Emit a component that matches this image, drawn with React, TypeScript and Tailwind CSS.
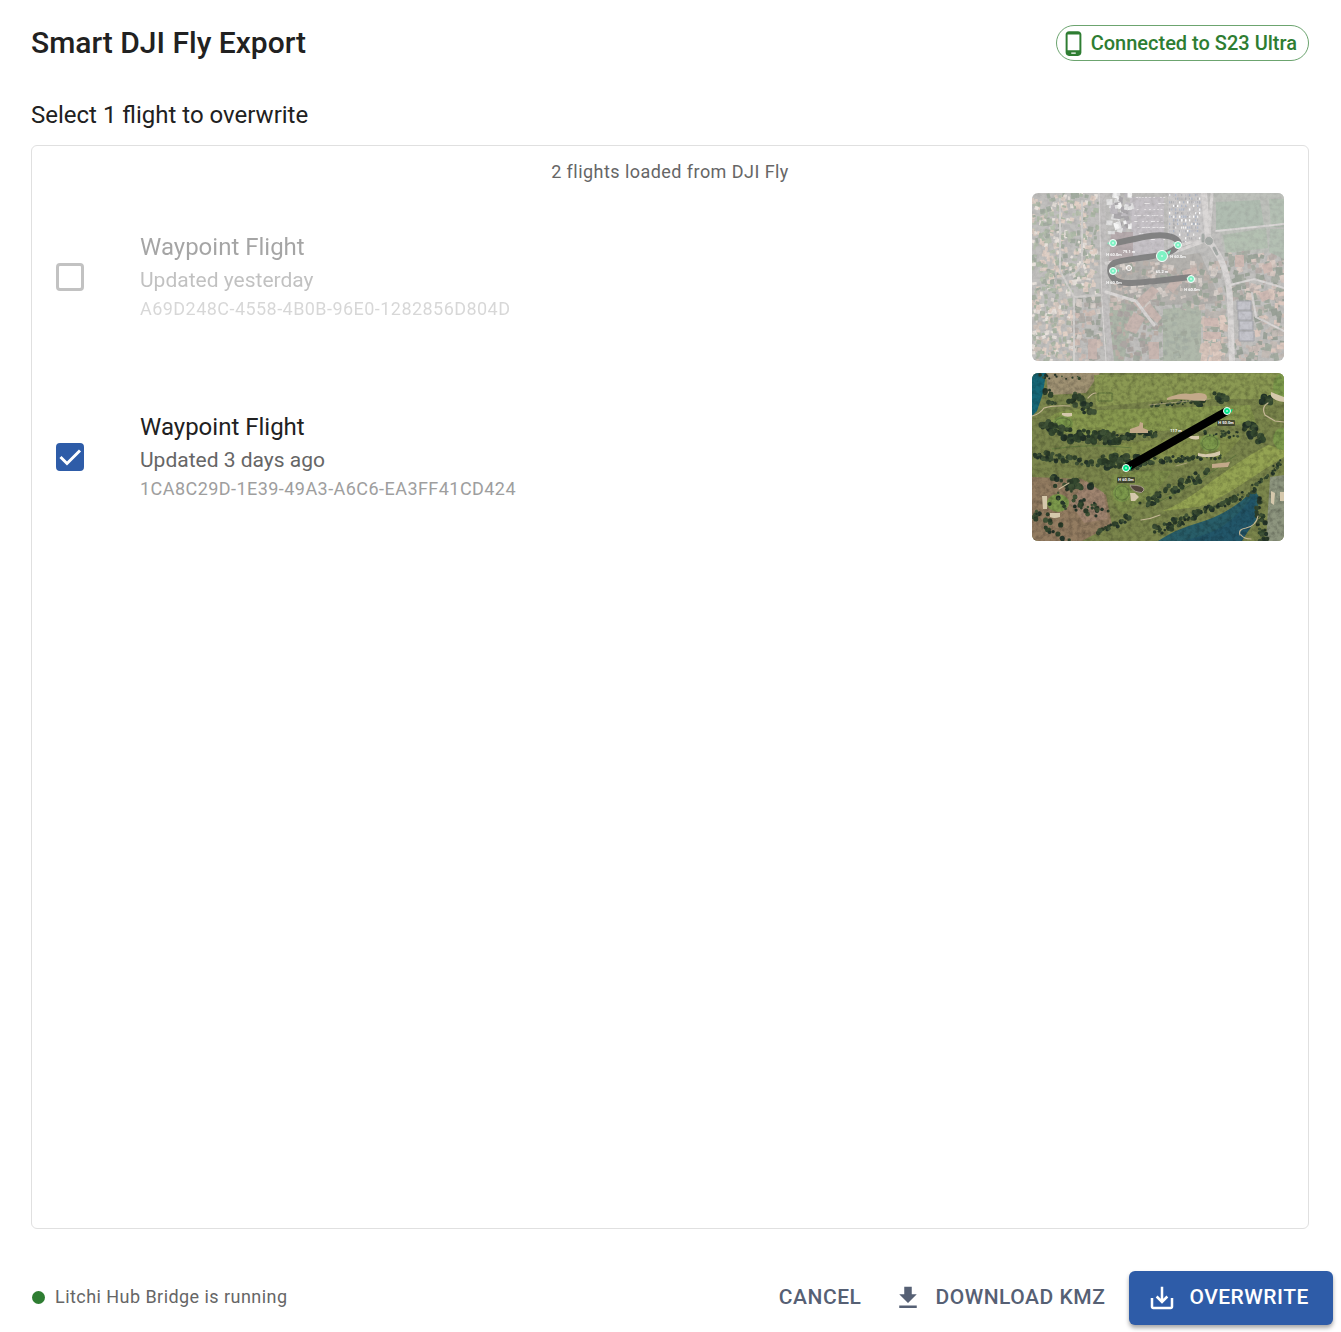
import { useState } from "react";
import { MdGetApp, MdPhoneAndroid, MdSaveAlt } from "react-icons/md";

type Point = [number, number];

// small seeded generator so the scattered trees and roofs never move between renders
function scatter(seed: number) {
  let state = seed;
  return () => {
    state = (state * 16807) % 2147483647;
    return state / 2147483647;
  };
}

type Band = { from: Point; to: Point; spread: number; count: number; size: number };

const golfTrees: Band[] = [
  { from: [40, 25], to: [62, 38], spread: 6, count: 26, size: 4 },
  { from: [12, 52], to: [46, 65], spread: 5, count: 34, size: 4 },
  { from: [46, 60], to: [82, 66], spread: 6, count: 44, size: 4 },
  { from: [82, 65], to: [126, 60], spread: 3, count: 36, size: 3 },
  { from: [14, 17], to: [20, 28], spread: 4, count: 12, size: 3 },
  { from: [2, 82], to: [62, 90], spread: 4, count: 44, size: 3 },
  { from: [66, 88], to: [106, 90], spread: 6, count: 46, size: 4 },
  { from: [106, 90], to: [160, 84], spread: 3, count: 40, size: 3 },
  { from: [160, 86], to: [192, 84], spread: 2, count: 18, size: 2 },
  { from: [118, 32], to: [168, 28], spread: 2, count: 26, size: 2 },
  { from: [170, 60], to: [208, 62], spread: 3, count: 26, size: 2 },
  { from: [112, 132], to: [172, 100], spread: 5, count: 54, size: 3 },
  { from: [124, 158], to: [176, 136], spread: 4, count: 54, size: 3 },
  { from: [176, 138], to: [222, 116], spread: 3, count: 44, size: 3 },
  { from: [222, 114], to: [252, 88], spread: 3, count: 30, size: 2 },
  { from: [226, 122], to: [232, 166], spread: 4, count: 30, size: 3 },
  { from: [186, 24], to: [194, 26], spread: 4, count: 12, size: 4 },
  { from: [165, 28], to: [169, 30], spread: 3, count: 8, size: 4 },
  { from: [230, 24], to: [238, 30], spread: 4, count: 12, size: 4 },
  { from: [216, 54], to: [228, 66], spread: 5, count: 22, size: 4 },
  { from: [20, 108], to: [60, 112], spread: 5, count: 22, size: 4 },
  { from: [20, 122], to: [72, 142], spread: 9, count: 38, size: 3 },
  { from: [6, 142], to: [34, 164], spread: 7, count: 24, size: 3 },
  { from: [64, 160], to: [100, 144], spread: 3, count: 30, size: 3 },
  { from: [0, 2], to: [60, 4], spread: 3, count: 14, size: 2 },
];

const canopyColors = ["#2c3e2a", "#34482f", "#25362a", "#3f5236"];

function Trees({ bands, seed }: { bands: Band[]; seed: number }) {
  const next = scatter(seed);
  return (
    <g>
      {bands.map((band, b) =>
        Array.from({ length: band.count }, (_, i) => {
          const t = next();
          const x = band.from[0] + (band.to[0] - band.from[0]) * t + (next() - 0.5) * band.spread * 2;
          const y = band.from[1] + (band.to[1] - band.from[1]) * t + (next() - 0.5) * band.spread * 2;
          const r = band.size * (0.4 + next() * 0.5);
          return <circle key={`${b}-${i}`} cx={x} cy={y} r={r} fill={canopyColors[Math.floor(next() * 4)]} />;
        })
      )}
    </g>
  );
}

type Block = { x: number; y: number; w: number; h: number; count: number; size: number; colors: string[] };

const townBlocks: Block[] = [
  { x: 0, y: 0, w: 66, h: 100, count: 380, size: 5, colors: ["#5d7551", "#708260", "#c7a48f", "#bda08d", "#d4c7bb", "#4a5d45"] },
  { x: 0, y: 100, w: 40, h: 68, count: 170, size: 5, colors: ["#5d7551", "#a58d7c", "#c7a48f", "#d4c7bb", "#596b4d"] },
  { x: 42, y: 104, w: 28, h: 64, count: 75, size: 6, colors: ["#46523f", "#695e55", "#a58070", "#b3a398"] },
  { x: 76, y: 0, w: 22, h: 40, count: 50, size: 7, colors: ["#c9c8c9", "#575259", "#807a83", "#eeeeee"] },
  { x: 76, y: 104, w: 54, h: 62, count: 120, size: 6, colors: ["#4c5a46", "#5c5049", "#796152", "#56694f"] },
  { x: 80, y: 70, w: 110, h: 45, count: 170, size: 6, colors: ["#46563e", "#766457", "#9b8174", "#5c5751", "#b3a398"] },
  { x: 130, y: 112, w: 66, h: 54, count: 80, size: 6, colors: ["#536650", "#66775c", "#49583f"] },
  { x: 170, y: 118, w: 26, h: 50, count: 45, size: 8, colors: ["#ad8875", "#c39a86", "#7e746a"] },
  { x: 192, y: 58, w: 60, h: 48, count: 105, size: 7, colors: ["#3d4d38", "#b7988a", "#79665d", "#56604d"] },
  { x: 222, y: 98, w: 30, h: 70, count: 75, size: 7, colors: ["#374634", "#bb9381", "#8a7b70", "#4b5b45"] },
  { x: 200, y: 148, w: 30, h: 20, count: 26, size: 6, colors: ["#374634", "#4b5b45", "#9b8174"] },
];

function Roofs() {
  const next = scatter(4711);
  return (
    <g>
      {townBlocks.map((block, b) =>
        Array.from({ length: block.count }, (_, i) => {
          const x = block.x + next() * block.w;
          const y = block.y + next() * block.h;
          const w = block.size * (0.4 + next() * 0.7);
          const h = block.size * (0.4 + next() * 0.7);
          const fill = block.colors[Math.floor(next() * block.colors.length)];
          return (
            <rect key={`${b}-${i}`} x={x - w / 2} y={y - h / 2} width={w} height={h} fill={fill}
              transform={`rotate(${-20 + next() * 40} ${x} ${y})`} />
          );
        })
      )}
    </g>
  );
}

function Cars() {
  const next = scatter(99);
  return (
    <g>
      {Array.from({ length: 200 }, (_, i) => (
        <rect key={i} x={137 + Math.floor(next() * 16) * 2} y={1 + Math.floor(next() * 14) * 3.6} width="1.3" height="2.2"
          fill={["#ffffff", "#6c6b70", "#87858b", "#6a7a98"][Math.floor(next() * 4)]} />
      ))}
      {Array.from({ length: 70 }, (_, i) => (
        <rect key={`r${i}`} x={102 + next() * 30} y={4 + Math.floor(next() * 8) * 6} width="2" height="1"
          fill="#e8e4e6" opacity="0.7" />
      ))}
    </g>
  );
}

function Grain({ id }: { id: string }) {
  return (
    <>
      <filter id={id} x="0" y="0" width="100%" height="100%">
        <feTurbulence type="fractalNoise" baseFrequency="0.22" numOctaves="4" seed="8" />
        <feColorMatrix values="0 0 0 0 0  0 0 0 0 0  0 0 0 0 0  1.6 0 0 0 -0.6" />
      </filter>
      <rect width="252" height="168" filter={`url(#${id})`} opacity="0.3" />
    </>
  );
}

function Marker({ x, y, r = 3.5 }: { x: number; y: number; r?: number }) {
  return (
    <g>
      <circle cx={x} cy={y} r={r} fill="#00e68a" stroke="#fff" strokeWidth="1" />
      <path d={`M${x} ${y - 1}v2`} stroke="#fff" strokeWidth="1" />
    </g>
  );
}

function MapLabel({ x, y, text, boxed }: { x: number; y: number; text: string; boxed?: boolean }) {
  return (
    <g>
      {boxed && <rect x={x - 9} y={y - 4} width="18" height="6" rx="1" fill="#222" opacity="0.65" />}
      <text x={x} y={y} textAnchor="middle" fontSize="4" fontWeight="700" fill="#fff">
        {text}
      </text>
    </g>
  );
}

function TownMap() {
  return (
    <svg viewBox="0 0 252 168" className="h-full w-full" role="img" aria-label="Flight path over a town">
      <rect width="252" height="168" fill="#85837f" />
      <path d="M98 4h34v62l-32 3z" fill="#8f8790" />
      <path d="M79 39h22v30l-24 2z" fill="#70595e" />
      <path d="M136 0h38v44l-38 12z" fill="#9a9696" />
      <path d="M78 72l90-12 22 50-110 4z" fill="#6b675f" />
      <path d="M78 106l24 8-10 54H78z" fill="#5d6f54" />
      <path d="M131 116l38-3v55h-38z" fill="#64765a" />
      <path d="M181 0h71v60h-60z" fill="#7f857a" />
      <Cars />
      <Roofs />
      <path d="M184 9l44-2 4 26-48 5z" fill="#647e66" />
      <path d="M191 42l43-7 2 20-42 5z" fill="#6c8468" />
      <path d="M237 6h15v28h-13zM238 36h14v30l-15-7z" fill="#6b826a" />
      <g fill="#937064">
        <path d="M101 110l19-17 7 5-19 19zM92 136l10-17 11 6-9 16zM134 94l12-13 6 5-11 14zM116 149h11v17h-10zM56 146h9v20h-9z" />
        <path d="M110 117l8-7 12 15-5 5z" />
      </g>
      <g fill="#a3796c">
        <path d="M172 125h14v8h-14zM171 139h18v7h-18zM203 62h9v12h-9zM230 72l9-3 2 9-9 3zM150 78l14-4 2 6-14 5zM226 100l10-3 3 8-9 4z" />
      </g>
      <g fill="none" stroke="#b8b2b0" strokeLinecap="round">
        <path d="M70 0l3 110 6 58" strokeWidth="6" stroke="#8b8786" />
        <path d="M67 0l3 110 4 58" strokeWidth="1" />
        <path d="M172 0l4 46c10 14 20 28 22 60l2 62" strokeWidth="6" />
        <path d="M180 0l-3 44" strokeWidth="3" />
        <path d="M74 99l30 9 18 24M74 70l60-8 36-13M170 49q-8-2-20 3" strokeWidth="3" />
        <path d="M184 38l68-7M198 92l24-6 30 9M220 100l4 24 28 14" strokeWidth="2" />
        <path d="M28 6v72l14 26 28-2M38 82q6 0 12-12V8M42 104v64" strokeWidth="2" stroke="#a9a49f" />
      </g>
      <circle cx="177" cy="48" r="4.5" fill="#4c5750" stroke="#a7a19d" strokeWidth="1" />
      <path d="M171 42v6M182 55l3 6" stroke="#4c5750" strokeWidth="3" strokeLinecap="round" />
      <g fill="#8d8d9b" stroke="#4d4e59">
        <path d="M205 108h14v9h-14zM206 118h14v9h-14zM207 128h14v9h-14zM207 138h15v10h-15z" />
      </g>
      <Grain id="town-grain" />
      <g fill="none" stroke="#000" strokeWidth="6" opacity="0.94">
        <path d="M83 50c18-3 38-10 53-7 7 1 12 5 10 9-4 8-17 10-30 12-14 2-28 3-34 6-6 4-4 12 0 16 8 7 26 3 42 2l35-4" />
      </g>
      <MapLabel x={82} y={63} text="H 60.0m" />
      <MapLabel x={97} y={60} text="79.1 m" />
      <MapLabel x={146} y={65} text="H 60.0m" />
      <MapLabel x={130} y={80} text="65.2 m" />
      <MapLabel x={82} y={91} text="H 60.0m" />
      <MapLabel x={160} y={98} text="H 60.0m" />
      <circle cx="97" cy="75" r="2.5" fill="none" stroke="#fff" />
      <path d="M75 50l3-1v3zM141 50l3-1-1 3zM135 59l4-2-2 5zM85 78l2-2v3zM154 85l3-1v3z" fill="#00e68a" />
      <Marker x={81} y={50} />
      <Marker x={146} y={52} />
      <Marker x={81} y={78} />
      <Marker x={159} y={86} />
      <Marker x={130} y={63} r={5.5} />
    </svg>
  );
}

function GolfMap() {
  return (
    <svg viewBox="0 0 252 168" className="h-full w-full" role="img" aria-label="Flight path over a golf course">
      <rect width="252" height="168" fill="#7b864c" />
      <path d="M14 0h54L54 20 16 22z" fill="#a19374" />
      <path d="M62 2l190-2v26l-110 0-78 8z" fill="#8b9953" />
      <path d="M18 44q12-10 50-7l150-5 6 18-94 8-76 4-40-4z" fill="#88994f" />
      <path d="M90 70l90-8 30 2-20 22-120 2z" fill="#84914c" />
      <path d="M130 138c30-10 60-42 106-66l16 4v8c-30 18-60 42-86 50z" fill="#95a453" />
      <path d="M80 102q30-6 60-4l-20 26-30 18q-16-16-10-40z" fill="#7f8f4c" />
      <path d="M0 104l50 2 24 16 6 30-30 16H0z" fill="#937c61" />
      <path d="M54 108l18 12 4 26-24 4-14-20z" fill="#a08570" />
      <path d="M0 0h14l-3 20-6 18-5 5z" fill="#176878" />
      <path d="M126 168q18-12 40-18 34-10 56-34l5 8-2 22-16 22z" fill="#285d68" />
      <path d="M150 168q36-8 50-22 14-12 23-26l1 24-14 24z" fill="#225669" />
      <path d="M238 104l14-2v66h-18z" fill="#8e967f" />
      <g fill="#7d9a4c">
        <ellipse cx="31" cy="50" rx="10" ry="7" />
        <ellipse cx="178" cy="70" rx="10" ry="9" />
        <ellipse cx="90" cy="120" rx="9" ry="9" />
        <ellipse cx="26" cy="130" rx="11" ry="9" />
        <ellipse cx="250" cy="14" rx="9" ry="13" />
        <ellipse cx="250" cy="66" rx="9" ry="11" />
      </g>
      <g fill="none" stroke="#647b40" strokeWidth="1">
        <ellipse cx="31" cy="50" rx="8" ry="5" />
        <ellipse cx="178" cy="70" rx="8" ry="7" />
        <ellipse cx="90" cy="120" rx="7" ry="7" />
        <path d="M66 20h14v8H66zM204 82q-40 30-80 48M20 76q40-6 80-1" />
      </g>
      <Trees bands={golfTrees} seed={2718} />
      <Grain id="golf-grain" />
      <g fill="#c3a98a">
        <path d="M135 25q14-6 24-4 8-2 14 0 4 3 0 7l-28-2-10 1zM98 56l9-3 1-4 3 1v5l5 2v3H98zM180 91l18-2-2 5-16 1z" />
      </g>
      <g fill="#d5c8ac">
        <path d="M155 63h12v3q-7 2-12-3zM166 80q10 3 22-2v4q-10 4-22 1zM239 19l5 2 8 3v5q-10-1-13-6zM98 120h5l4 4-4 4h-4zM10 123h5v13h-4zM18 140h10v4q-6 2-10 0zM30 40h10v3q-6 2-10-1zM239 118l4 2-1 12-3-2zM248 119h4v9h-4z" />
      </g>
      <g fill="none" stroke="#c4b695" strokeWidth="1.2" strokeLinecap="round">
        <path d="M0 43q8-2 12-8 10-3 26-2M56 25q4-5 8-5M109 147q10-1 19-5M236 30q-7 4-3 12l10 6 9 1M208 162q-2-6 6-7 10-2 12-12M209 162q3 4 10 4M27 116l10-6" />
        <path d="M144 93l11-3M117 32l60-6" strokeWidth="1" opacity="0.6" />
      </g>
      <path d="M98 112q14 0 14 5-2 4-6 2-6-1-8-7" fill="#51443b" stroke="#a49b8c" />
      <path d="M94 95L195 38" stroke="#000" strokeWidth="8" />
      <MapLabel x={194} y={51} text="H 50.0m" boxed />
      <MapLabel x={94} y={108} text="H 60.0m" boxed />
      <MapLabel x={144} y={59} text="117 m" />
      <path d="M97 95l3-2-2 5zM198 37l3-1-2 4z" fill="#00e68a" />
      <Marker x={94} y={95} />
      <Marker x={195} y={38} />
    </svg>
  );
}

const flights = [
  { id: "A69D248C-4558-4B0B-96E0-1282856D804D", name: "Waypoint Flight", updated: "Updated yesterday", Map: TownMap },
  { id: "1CA8C29D-1E39-49A3-A6C6-EA3FF41CD424", name: "Waypoint Flight", updated: "Updated 3 days ago", Map: GolfMap },
];

export default function App() {
  const [selected, setSelected] = useState<string | null>(flights[1].id);

  return (
    <div className="flex min-h-screen flex-col bg-white font-[Roboto,sans-serif] text-[#212121]">
      <header className="flex items-center justify-between pt-[25px] pr-8 pl-[31px]">
        <h1 className="text-[30px] leading-9 font-medium">Smart DJI Fly Export</h1>
        <div className="flex h-9 items-center gap-1 rounded-full border border-[#2e7d32]/70 pr-[11px] pl-[3px] text-xl font-medium text-[#2e7d32]">
          <MdPhoneAndroid className="size-[27px]" />
          Connected to S23 Ultra
        </div>
      </header>

      <main className="flex flex-1 flex-col pt-9 pr-8 pl-[31px]">
        <h2 className="text-2xl leading-9">Select 1 flight to overwrite</h2>
        <section className="mt-3 flex-1 rounded-md border border-[#e0e0e0] pt-3 pr-6 pl-6">
          <p className="text-center text-lg leading-7 tracking-wide text-[#666]">2 flights loaded from DJI Fly</p>
          <ul className="mt-[7px] flex flex-col gap-3">
            {flights.map(({ id, name, updated, Map }) => {
              const disabled = selected !== null && selected !== id;
              return (
                <li key={id}>
                  <label className={`flex items-center ${disabled ? "" : "cursor-pointer"}`}>
                    <span className={`grid size-7 shrink-0 place-items-center ${disabled ? "opacity-40" : ""}`}>
                      <input
                        type="checkbox"
                        checked={selected === id}
                        disabled={disabled}
                        onChange={() => setSelected(selected === id ? null : id)}
                        className="peer col-start-1 row-start-1 size-7 appearance-none rounded-[4px] border-3 border-[#666] checked:border-[#2e5ca8] checked:bg-[#2e5ca8]"
                      />
                      <svg viewBox="0 0 28 28" className="pointer-events-none invisible col-start-1 row-start-1 size-7 peer-checked:visible">
                        <path d="M4.5 14l6.5 6.5L24 7.5" fill="none" stroke="#fff" strokeWidth="3" />
                      </svg>
                    </span>
                    <span className={`ml-14 flex flex-1 flex-col pb-0.5 ${disabled ? "opacity-40" : ""}`}>
                      <span className="text-2xl leading-9">{name}</span>
                      <span className="text-[21px] leading-[30px] text-[#666]">{updated}</span>
                      <span className="text-lg leading-7 tracking-wide text-[#9e9e9e]">{id}</span>
                    </span>
                    <span className={`h-[168px] w-[252px] shrink-0 overflow-hidden rounded-md ${disabled ? "opacity-50" : ""}`}>
                      <Map />
                    </span>
                  </label>
                </li>
              );
            })}
          </ul>
        </section>
      </main>

      <footer className="mt-[42px] mb-[7px] flex items-center justify-between pr-2 pl-8">
        <p className="flex items-center gap-[10px] pb-0.5 text-lg tracking-wide text-[#666]">
          <span className="size-[13px] rounded-full bg-[#2e7d32]" />
          Litchi Hub Bridge is running
        </p>
        <div className="flex items-center text-[21px] font-medium tracking-wide text-[#566074]">
          <button type="button" className="h-[54px] px-3">CANCEL</button>
          <button type="button" className="ml-2 flex h-[54px] items-center gap-3 px-3">
            <MdGetApp className="size-[30px]" />
            DOWNLOAD KMZ
          </button>
          <button type="button" className="ml-3 flex h-[54px] items-center gap-3 rounded-md bg-[#2e5ca8] pr-6 pl-[18px] text-white shadow-[0_3px_4px_rgba(0,0,0,0.35)]">
            <MdSaveAlt className="size-[30px]" />
            OVERWRITE
          </button>
        </div>
      </footer>
    </div>
  );
}
